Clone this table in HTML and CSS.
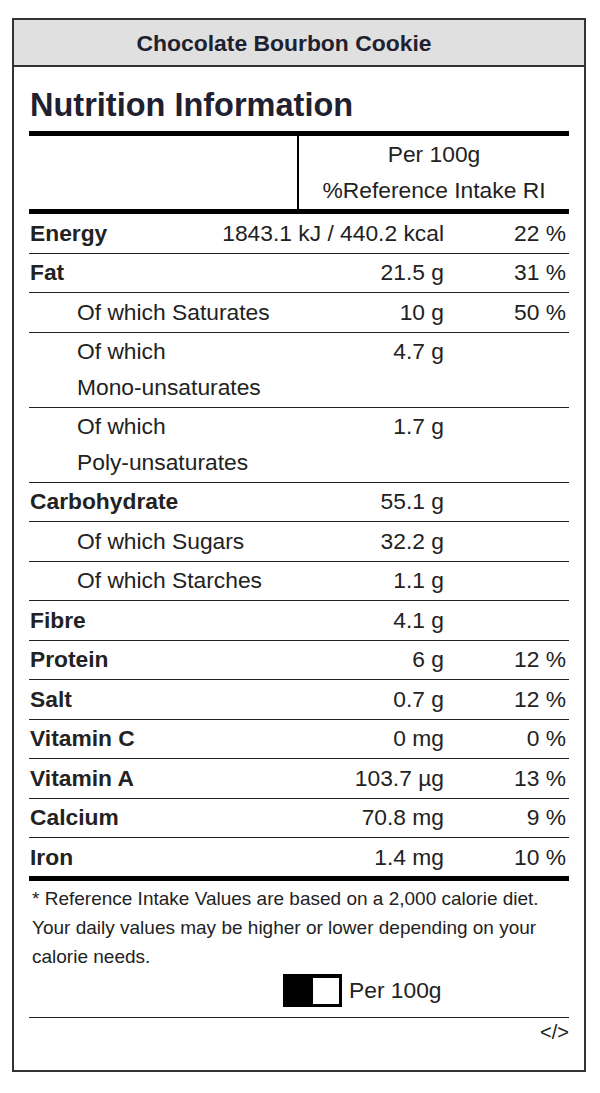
FILE: index.html
```html
<!DOCTYPE html>
<html lang="en">
<head>
<meta charset="utf-8">
<title>Chocolate Bourbon Cookie – Nutrition Information</title>
<link rel="stylesheet" href="styles.css">
</head>
<body>
<div class="card">
  <div class="card-title">Chocolate Bourbon Cookie</div>
  <div class="card-body">
    <h1 class="heading">Nutrition Information</h1>
    <div class="thead">
      <div class="thead-blank"></div>
      <div class="thead-cols">
        <div>Per 100g</div>
        <div>%Reference Intake RI</div>
      </div>
    </div>
    <div class="rows">
      <div class="row"><div class="name bold">Energy</div><div class="val">1843.1 kJ / 440.2 kcal</div><div class="pct">22 %</div></div>
      <div class="row"><div class="name bold">Fat</div><div class="val">21.5 g</div><div class="pct">31 %</div></div>
      <div class="row"><div class="name sub">Of which Saturates</div><div class="val">10 g</div><div class="pct">50 %</div></div>
      <div class="row"><div class="name sub">Of which <span class="nowrap">Mono-unsaturates</span></div><div class="val">4.7 g</div><div class="pct"></div></div>
      <div class="row"><div class="name sub">Of which <span class="nowrap">Poly-unsaturates</span></div><div class="val">1.7 g</div><div class="pct"></div></div>
      <div class="row"><div class="name bold">Carbohydrate</div><div class="val">55.1 g</div><div class="pct"></div></div>
      <div class="row"><div class="name sub">Of which Sugars</div><div class="val">32.2 g</div><div class="pct"></div></div>
      <div class="row"><div class="name sub">Of which Starches</div><div class="val">1.1 g</div><div class="pct"></div></div>
      <div class="row"><div class="name bold">Fibre</div><div class="val">4.1 g</div><div class="pct"></div></div>
      <div class="row"><div class="name bold">Protein</div><div class="val">6 g</div><div class="pct">12 %</div></div>
      <div class="row"><div class="name bold">Salt</div><div class="val">0.7 g</div><div class="pct">12 %</div></div>
      <div class="row"><div class="name bold">Vitamin C</div><div class="val">0 mg</div><div class="pct">0 %</div></div>
      <div class="row"><div class="name bold">Vitamin A</div><div class="val">103.7 µg</div><div class="pct">13 %</div></div>
      <div class="row"><div class="name bold">Calcium</div><div class="val">70.8 mg</div><div class="pct">9 %</div></div>
      <div class="row"><div class="name bold">Iron</div><div class="val">1.4 mg</div><div class="pct">10 %</div></div>
    </div>
    <p class="footnote">* Reference Intake Values are based on a 2,000 calorie diet. Your daily values may be higher or lower depending on your calorie needs.</p>
    <div class="toggle-row">
      <span class="toggle"><span class="knob"></span></span>
      <span class="toggle-label">Per 100g</span>
    </div>
    <div class="embed">&lt;/&gt;</div>
  </div>
</div>
</body>
</html>
```
FILE: styles.css
```css
* {
  box-sizing: border-box;
}

html, body {
  margin: 0;
  padding: 0;
  background: #ffffff;
}

body {
  font-family: "Liberation Sans", Arial, sans-serif;
  color: #222;
}

.card {
  margin: 18px 14px 0 12px;
  border: 2px solid #333;
  background: #fff;
}

.card-title {
  height: 47px;
  padding: 1px 30px 0 0;
  line-height: 44px;
  text-align: center;
  font-weight: bold;
  font-size: 22.9px;
  color: #1f2130;
  background: #e0e0e0;
  border-bottom: 2px solid #333;
}

.card-body {
  padding: 0 15px 25px;
}

.heading {
  margin: 18px 0 6px;
  padding-left: 1px;
  font-size: 32.5px;
  line-height: 40px;
  font-weight: bold;
  color: #1f2130;
}

.thead {
  display: grid;
  grid-template-columns: 1fr 1fr;
  border-top: 5px solid #000;
  border-bottom: 5px solid #000;
  font-size: 22.8px;
  line-height: 35.5px;
}

.thead-blank {
  border-right: 2px solid #000;
}

.thead-cols {
  padding: 1px 0;
  text-align: center;
}

.rows {
  border-bottom: 5px solid #000;
}

.row {
  display: flex;
  align-items: flex-start;
  padding: 1.5px 0;
  border-bottom: 1px solid #222;
  font-size: 22.8px;
  line-height: 35.5px;
}

.row:last-child {
  border-bottom: none;
  padding-bottom: 1px;
}

.name {
  flex: 0 1 270px;
  min-width: 0;
  padding-left: 1px;
}

.name.bold {
  font-weight: bold;
}

.name.sub {
  padding-left: 48px;
}

.nowrap {
  white-space: nowrap;
}

.val {
  flex: 1 0 auto;
  text-align: right;
  white-space: nowrap;
  padding-right: 1px;
}

.pct {
  flex: 0 0 124px;
  text-align: right;
  padding-right: 3px;
  white-space: nowrap;
}

.footnote {
  margin: 2.5px 0 0;
  padding: 0 3px;
  font-size: 19px;
  line-height: 29px;
}

.toggle-row {
  display: flex;
  align-items: center;
  margin-top: 3.5px;
  padding-left: 254px;
  height: 33px;
}

.toggle {
  display: flex;
  justify-content: flex-end;
  align-items: center;
  width: 59px;
  height: 33px;
  border: 3px solid #000;
  background: #000;
}

.knob {
  display: block;
  width: 26px;
  height: 26px;
  background: #fff;
}

.toggle-label {
  margin-left: 7px;
  font-size: 22.8px;
  line-height: 33px;
}

.embed {
  margin-top: 10px;
  border-top: 1px solid #222;
  padding-top: 2px;
  text-align: right;
  font-size: 20px;
  line-height: 25px;
  color: #222;
}
```
